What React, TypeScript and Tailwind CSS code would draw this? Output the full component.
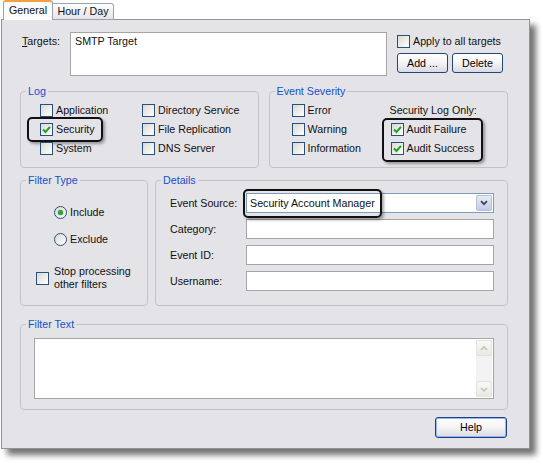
import type { ReactNode } from 'react';

function CheckBox({ checked = false }: { checked?: boolean }) {
  return (
    <span className="inline-flex items-center justify-center w-[13px] h-[13px] shrink-0 border border-[#2a4f7c] bg-linear-to-br from-[#d9d9d4] to-white">
      {checked && (
        <svg width="9" height="9" viewBox="0 0 9 9">
          <polyline points="1,4.5 3.5,7 8,1.8" fill="none" stroke="#21a121" strokeWidth="2" />
        </svg>
      )}
    </span>
  );
}

function Radio({ checked = false }: { checked?: boolean }) {
  return (
    <span className="inline-flex items-center justify-center w-[13px] h-[13px] shrink-0 rounded-full border border-[#2a4f7c] bg-linear-to-br from-[#d9d9d4] to-white">
      {checked && <span className="w-[5px] h-[5px] rounded-full bg-[#3aa43a] shadow-[0_0_1px_#1e7a1e]" />}
    </span>
  );
}

function Check({ label, checked, children }: { label: string; checked?: boolean; children?: ReactNode }) {
  return (
    <div className="relative flex items-center h-[19px] gap-[3px]">
      <CheckBox checked={checked} />
      <span>{label}</span>
      {children}
    </div>
  );
}

function Highlight({ className }: { className: string }) {
  return (
    <div
      className={`absolute pointer-events-none border-2 border-[#111] rounded-[5px] shadow-[2px_2px_3px_rgba(0,0,0,0.35)] ${className}`}
    />
  );
}

function Button({ children, wide, primary }: { children: ReactNode; wide?: boolean; primary?: boolean }) {
  return (
    <button
      className={`h-[20px] ${wide ? 'w-[72px] h-[21px]' : 'w-[51px]'} rounded-[3px] border ${
        primary ? 'border-[#1a3f8c] shadow-[inset_0_0_0_1px_#9bb6ec]' : 'border-[#23467a]'
      } bg-linear-to-b from-white via-[#f4f4f6] to-[#d9d9e2] text-[10.7px] leading-none text-black`}
    >
      {children}
    </button>
  );
}

function Group({
  title,
  className,
  children,
}: {
  title: string;
  className: string;
  children: ReactNode;
}) {
  return (
    <fieldset className={`relative border border-[#c3c3c6] rounded-[4px] ${className}`}>
      <legend className="ml-[5px] px-[2px] leading-[13px] text-[#1550c8]">{title}</legend>
      {children}
    </fieldset>
  );
}

function TextBox() {
  return <div className="w-[248px] h-[20px] bg-white border border-[#a5a5a8]" />;
}

export default function App() {
  return (
    <div className="w-[543px] h-[464px] bg-white font-['Liberation_Sans',Arial,sans-serif] text-[10.7px] leading-[13px] text-[#111]">
      <div className="relative z-10 flex items-end h-[20px] pl-[3px]">
        <div className="h-[20px] w-[50px] flex items-center justify-center border border-b-0 border-[#9aa3a6] border-t-2 border-t-[#f0a040] rounded-t-[3px] bg-[#fbfbfc] pb-[1px]">
          General
        </div>
        <div className="h-[17px] w-[61px] flex items-center justify-center border border-[#9aa3a6] border-l-0 rounded-tr-[3px] bg-linear-to-b from-white to-[#e4e3ea]">
          Hour / Day
        </div>
      </div>

      <div className="-mt-px ml-px w-[529px] h-[430px] border border-[#8f9597] bg-[#e4e3e8] shadow-[6px_6px_6px_rgba(0,0,0,0.55)] pt-[12px] pl-[18px] pr-[21px] flex flex-col">
        {/* targets */}
        <div className="flex h-[44px]">
          <div className="w-[50px] pl-[2px] pt-[3px]">
            <span className="underline">T</span>argets:
          </div>
          <div className="w-[317px] h-[44px] bg-white border border-[#a5a5a8] px-[4px] pt-[2px]">SMTP Target</div>
          <div className="ml-[10px] flex flex-col">
            <div className="flex items-center gap-[3px] mt-[3px] h-[13px]">
              <CheckBox />
              <span>Apply to all targets</span>
            </div>
            <div className="flex gap-[4px] mt-[5px]">
              <Button>Add ...</Button>
              <Button>Delete</Button>
            </div>
          </div>
        </div>

        {/* log + severity */}
        <div className="flex gap-[10px] mt-[9px]">
          <Group title="Log" className="w-[239px] h-[83px]">
            <div className="grid grid-cols-[102px_1fr] pl-[19px] pt-[3px]">
              <div>
                <Check label="Application" />
                <Check label="Security" checked>
                  <Highlight className="-left-[13px] -top-[3px] w-[76px] h-[25px]" />
                </Check>
                <Check label="System" />
              </div>
              <div>
                <Check label="Directory Service" />
                <Check label="File Replication" />
                <Check label="DNS Server" />
              </div>
            </div>
          </Group>
          <Group title="Event Severity" className="w-[240px] h-[83px]">
            <div className="grid grid-cols-[98px_1fr] pl-[22px] pt-[3px]">
              <div>
                <Check label="Error" />
                <Check label="Warning" />
                <Check label="Information" />
              </div>
              <div>
                <div className="h-[19px] flex items-center">Security Log Only:</div>
                <div className="relative pl-px">
                  <Check label="Audit Failure" checked />
                  <Check label="Audit Success" checked />
                  <Highlight className="-left-[8px] -top-[2px] w-[101px] h-[44px]" />
                </div>
              </div>
            </div>
          </Group>
        </div>

        {/* filter type + details */}
        <div className="flex gap-[7px] mt-[6px]">
          <Group title="Filter Type" className="w-[128px] h-[132px]">
            <div className="pl-[33px] pt-[16px]">
              <div className="flex items-center h-[19px] gap-[3px]">
                <Radio checked />
                <span>Include</span>
              </div>
              <div className="flex items-center h-[19px] gap-[3px] mt-[8px]">
                <Radio />
                <span>Exclude</span>
              </div>
            </div>
            <div className="flex items-center gap-[5px] pl-[15px] mt-[16px]">
              <CheckBox />
              <span>
                Stop processing
                <br />
                other filters
              </span>
            </div>
          </Group>
          <Group title="Details" className="w-[353px] h-[132px]">
            <div className="flex flex-col gap-[6px] pl-[14px] pt-[6px]">
              <div className="flex items-center">
                <span className="w-[76px]">Event Source:</span>
                <div className="relative w-[248px] h-[20px] bg-white border border-[#7f9db9] flex items-center pl-[3px]">
                  <span className="flex-1">Security Account Manager</span>
                  <span className="w-[16px] h-[16px] mr-px flex items-center justify-center rounded-[2px] border border-[#b4bfdc] bg-linear-to-b from-[#e8ecf8] to-[#c3cbe4]">
                    <svg width="8" height="6" viewBox="0 0 8 6">
                      <polyline points="1,1.2 4,4.2 7,1.2" fill="none" stroke="#3a4660" strokeWidth="1.8" />
                    </svg>
                  </span>
                  <Highlight className="-left-[4px] -top-[5px] w-[139px] h-[29px]" />
                </div>
              </div>
              <div className="flex items-center">
                <span className="w-[76px]">Category:</span>
                <TextBox />
              </div>
              <div className="flex items-center">
                <span className="w-[76px]">Event ID:</span>
                <TextBox />
              </div>
              <div className="flex items-center">
                <span className="w-[76px]">Username:</span>
                <TextBox />
              </div>
            </div>
          </Group>
        </div>

        {/* filter text */}
        <Group title="Filter Text" className="w-[488px] h-[92px] mt-[12px]">
          <div className="pl-[13px] pt-[7px]">
            <div className="w-[460px] h-[61px] bg-white border border-[#a5a5a8] flex justify-end p-px">
              <div className="w-[16px] flex flex-col bg-[#f3f3f6]">
                <span className="h-[16px] flex items-center justify-center rounded-[2px] border border-[#e2e2dc] bg-linear-to-b from-[#f8f8f6] to-[#e9e9e4]">
                  <svg width="8" height="5" viewBox="0 0 8 5">
                    <polyline points="1,4 4,1 7,4" fill="none" stroke="#c3c3bc" strokeWidth="1.6" />
                  </svg>
                </span>
                <span className="flex-1" />
                <span className="h-[16px] flex items-center justify-center rounded-[2px] border border-[#e2e2dc] bg-linear-to-b from-[#f8f8f6] to-[#e9e9e4]">
                  <svg width="8" height="5" viewBox="0 0 8 5">
                    <polyline points="1,1 4,4 7,1" fill="none" stroke="#c3c3bc" strokeWidth="1.6" />
                  </svg>
                </span>
              </div>
            </div>
          </div>
        </Group>

        <div className="flex justify-end mt-[7px] mr-px">
          <Button wide primary>
            Help
          </Button>
        </div>
      </div>
    </div>
  );
}
